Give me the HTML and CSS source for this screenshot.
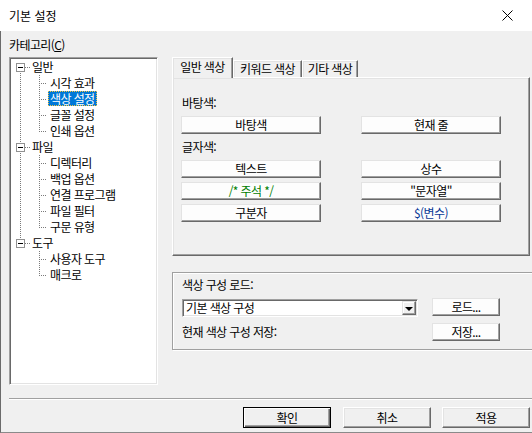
FILE: index.html
```html
<!DOCTYPE html>
<html lang="ko">

<head>
    <meta charset="UTF-8">
    <meta name="viewport" content="width=device-width, initial-scale=1.0">
    <title>기본 설정</title>
    <link rel="stylesheet" href="styles.css">
</head>

<body>

    <div class="window">
        <div class="titlebar">
            <span class="title">기본 설정</span>
            <svg class="close" width="11" height="11" viewBox="0 0 11 11">
                <path d="M0.5 0.5 L10.5 10.5 M10.5 0.5 L0.5 10.5" stroke="#000" stroke-width="1" fill="none" />
            </svg>
        </div>

        <div class="client">
            <div class="cat-label">카테고리(<u>C</u>)</div>

            <div class="main">
                <!-- category tree -->
                <div class="tree">
                    <div class="row">
                        <span class="g g-root first"><span class="box"></span></span>
                        <span class="item">일반</span>
                    </div>
                    <div class="row"><span class="g g-pass"></span><span class="g2 g-tee"></span><span class="item">시각 효과</span></div>
                    <div class="row"><span class="g g-pass"></span><span class="g2 g-tee"></span><span class="item selected">색상 설정</span></div>
                    <div class="row"><span class="g g-pass"></span><span class="g2 g-tee"></span><span class="item">글꼴 설정</span></div>
                    <div class="row"><span class="g g-pass"></span><span class="g2 g-ell"></span><span class="item">인쇄 옵션</span></div>

                    <div class="row">
                        <span class="g g-root"><span class="box"></span></span>
                        <span class="item">파일</span>
                    </div>
                    <div class="row"><span class="g g-pass"></span><span class="g2 g-tee"></span><span class="item">디렉터리</span></div>
                    <div class="row"><span class="g g-pass"></span><span class="g2 g-tee"></span><span class="item">백업 옵션</span></div>
                    <div class="row"><span class="g g-pass"></span><span class="g2 g-tee"></span><span class="item">연결 프로그램</span></div>
                    <div class="row"><span class="g g-pass"></span><span class="g2 g-tee"></span><span class="item">파일 필터</span></div>
                    <div class="row"><span class="g g-pass"></span><span class="g2 g-ell"></span><span class="item">구문 유형</span></div>

                    <div class="row">
                        <span class="g g-root last"><span class="box"></span></span>
                        <span class="item">도구</span>
                    </div>
                    <div class="row"><span class="g"></span><span class="g2 g-tee"></span><span class="item">사용자 도구</span></div>
                    <div class="row"><span class="g"></span><span class="g2 g-ell"></span><span class="item">매크로</span></div>
                </div>

                <div class="right">
                    <div class="tabs">
                        <div class="tab active">일반 색상</div>
                        <div class="tab tab-kw">키워드 색상</div>
                        <div class="tab tab-etc">기타 색상</div>
                    </div>

                    <div class="panel">
                        <div class="label">바탕색:</div>
                        <div class="btn-grid">
                            <button class="btn">바탕색</button>
                            <button class="btn">현재 줄</button>
                        </div>
                        <div class="label">글자색:</div>
                        <div class="btn-grid">
                            <button class="btn">텍스트</button>
                            <button class="btn">상수</button>
                            <button class="btn comment">/* 주석 */</button>
                            <button class="btn">"문자열"</button>
                            <button class="btn">구분자</button>
                            <button class="btn variable">$(변수)</button>
                        </div>
                    </div>

                    <div class="group">
                        <div class="label">색상 구성 로드:</div>
                        <div class="load-row">
                            <div class="combo">
                                <span class="combo-text">기본 색상 구성</span>
                                <span class="combo-arrow"><span class="tri"></span></span>
                            </div>
                            <button class="btn small up">로드...</button>
                        </div>
                        <div class="save-row">
                            <span class="label">현재 색상 구성 저장:</span>
                            <button class="btn small">저장...</button>
                        </div>
                    </div>
                </div>
            </div>

            <div class="separator"></div>

            <div class="actions">
                <button class="dlg-btn default">확인</button>
                <button class="dlg-btn">취소</button>
                <button class="dlg-btn">적용</button>
            </div>
        </div>
    </div>

</body>

</html>
```

FILE: styles.css
```css
body {
    margin: 0;
    font-family: "Noto Sans CJK KR", "Noto Sans", sans-serif;
    font-size: 12px;
    color: #000;
    background: #f0f0f0;
}

.window {
    width: 532px;
    height: 433px;
    overflow: hidden;
    --v: repeating-linear-gradient(to bottom, #7a7a7a 0 1px, transparent 1px 2px);
    --h: repeating-linear-gradient(to right, #7a7a7a 0 1px, transparent 1px 2px);
}

.titlebar {
    height: 31px;
    background: #fff;
    display: flex;
    align-items: center;
    justify-content: space-between;
    padding: 0 19px 0 9px;
}

.title {
    font-size: 12px;
}

.close {
    display: block;
}

.client {
    height: 402px;
    box-sizing: border-box;
    border-left: 1px solid #6b6b6b;
    border-bottom: 1px solid #8a8a8a;
    padding: 7px 0 0 8px;
    letter-spacing: -0.6px;
}

.cat-label {
    line-height: 13px;
    height: 13px;
}

.main {
    display: flex;
    gap: 14px;
    margin-top: 6px;
    height: 328px;
}

/* tree */
.tree {
    width: 149px;
    flex: none;
    box-sizing: border-box;
    background: #fff;
    border: 1px solid;
    border-color: #a0a0a0 #fff #fff #a0a0a0;
    box-shadow: inset 1px 1px #696969, inset -1px -1px #e3e3e3;
    padding: 1px;
}

.row {
    display: flex;
    height: 16px;
}

.g {
    width: 19px;
    height: 16px;
    flex: none;
    background-repeat: no-repeat;
}

.g2 {
    width: 18px;
    height: 16px;
    flex: none;
    background-repeat: no-repeat;
}

.g-pass {
    background-image: var(--v);
    background-size: 1px 16px;
    background-position: 9px 0;
}

.g-tee {
    background-image: var(--h), var(--v);
    background-size: 8px 1px, 1px 16px;
    background-position: 9px 8px, 9px 0;
}

.g-ell {
    background-image: var(--h), var(--v);
    background-size: 8px 1px, 1px 9px;
    background-position: 9px 8px, 9px 0;
}

.g-root {
    background-image: var(--h), var(--v);
    background-size: 5px 1px, 1px 16px;
    background-position: 14px 8px, 9px 0;
}

.g-root.first {
    background-size: 5px 1px, 1px 4px;
    background-position: 14px 8px, 9px 12px;
}

.g-root.last {
    background-size: 5px 1px, 1px 4px;
    background-position: 14px 8px, 9px 0;
}

.box {
    display: block;
    width: 9px;
    height: 9px;
    box-sizing: border-box;
    margin: 4px 0 0 5px;
    border: 1px solid #919191;
    background: linear-gradient(#000, #000) center / 5px 1px no-repeat, #fff;
}

.item {
    height: 15px;
    line-height: 15px;
    padding: 0 2px;
    white-space: nowrap;
}

.item.selected {
    background: #0078d7;
    color: #fff;
    outline: 1px dotted #f5c542;
    outline-offset: -1px;
}

/* right side */
.right {
    width: 360px;
    flex: none;
}

.tabs {
    display: flex;
    height: 21px;
}

.tab {
    box-sizing: border-box;
    height: 17px;
    margin-top: 3px;
    line-height: 15px;
    text-align: center;
    border: 1px solid;
    border-color: #fff #696969 transparent #fff;
    border-bottom: none;
    box-shadow: inset -1px 0 #a0a0a0, inset 1px 1px #e3e3e3;
    background: #f0f0f0;
}

.tab.active {
    width: 61px;
    height: 21px;
    margin-top: 0;
    line-height: 17px;
    position: relative;
    z-index: 1;
}

.tab-kw {
    width: 69px;
}

.tab-etc {
    width: 56px;
}

.panel {
    margin-top: -1px;
    width: 358px;
    height: 179px;
    box-sizing: border-box;
    border: 1px solid;
    border-color: #fff #696969 #696969 #fff;
    box-shadow: inset -1px -1px #a0a0a0, inset 1px 1px #e3e3e3;
    padding: 19px 0 0 8px;
}

.label {
    line-height: 12px;
    height: 12px;
    margin-left: 1px;
    white-space: nowrap;
}

.btn-grid {
    display: grid;
    grid-template-columns: 140px 140px;
    column-gap: 40px;
    row-gap: 4px;
    margin: 7px 0;
}

.btn {
    display: block;
    width: 140px;
    height: 18px;
    box-sizing: border-box;
    margin: 0;
    padding: 0;
    font: inherit;
    letter-spacing: inherit;
    line-height: 14px;
    color: #000;
    background: #fdfdfd;
    border: 1px solid;
    border-color: #e3e3e3 #696969 #696969 #e3e3e3;
    box-shadow: inset -1px -1px #a0a0a0;
}

.btn.comment {
    color: #008000;
}

.btn.variable {
    color: #0a3a96;
}

.btn.small {
    width: 68px;
}

.btn.up {
    margin-top: -1px;
}

.group {
    margin-top: 16px;
    width: 364px;
    height: 78px;
    box-sizing: border-box;
    border: 1px solid #a0a0a0;
    box-shadow: inset 1px 1px #fff, 1px 1px #fff;
    padding: 6px 0 0 9px;
}

.group .label {
    margin-left: 0;
}

.load-row {
    display: flex;
    gap: 14px;
    margin-top: 8px;
    width: 318px;
}

.combo {
    width: 236px;
    height: 18px;
    box-sizing: border-box;
    display: flex;
    align-items: center;
    background: #fff;
    border: 1px solid;
    border-color: #a0a0a0 #fff #fff #a0a0a0;
    box-shadow: inset 1px 1px #696969, inset -1px -1px #e3e3e3;
    padding: 1px 1px 1px 2px;
}

.combo-text {
    flex: 1;
    line-height: 14px;
    padding-left: 1px;
}

.combo-arrow {
    width: 14px;
    height: 14px;
    box-sizing: border-box;
    display: flex;
    align-items: center;
    justify-content: center;
    background: #f0f0f0;
    border: 1px solid;
    border-color: #e3e3e3 #696969 #696969 #e3e3e3;
    box-shadow: inset -1px -1px #a0a0a0, inset 1px 1px #fff;
}

.tri {
    width: 0;
    height: 0;
    border-left: 4px solid transparent;
    border-right: 4px solid transparent;
    border-top: 4px solid #000;
    margin-top: 1px;
}

.save-row {
    display: flex;
    align-items: center;
    justify-content: space-between;
    width: 318px;
    height: 18px;
    margin-top: 6px;
}

.separator {
    width: 523px;
    height: 1px;
    margin-top: 13px;
    background: #a0a0a0;
    border-bottom: 1px solid #fff;
}

.actions {
    display: flex;
    justify-content: flex-end;
    gap: 11px;
    margin-top: 7px;
    padding-right: 2px;
}

.dlg-btn {
    width: 88px;
    height: 21px;
    box-sizing: border-box;
    margin: 0;
    padding: 0;
    font: inherit;
    letter-spacing: inherit;
    color: #000;
    background: #f0f0f0;
    border: 1px solid;
    border-color: #fff #696969 #696969 #fff;
    box-shadow: inset -1px -1px #a0a0a0, inset 1px 1px #e3e3e3;
}

.dlg-btn.default {
    margin-right: 1px;
    border-color: #000;
    box-shadow: inset 1px 1px #fff, inset -1px -1px #696969, inset -2px -2px #a0a0a0;
}
```
